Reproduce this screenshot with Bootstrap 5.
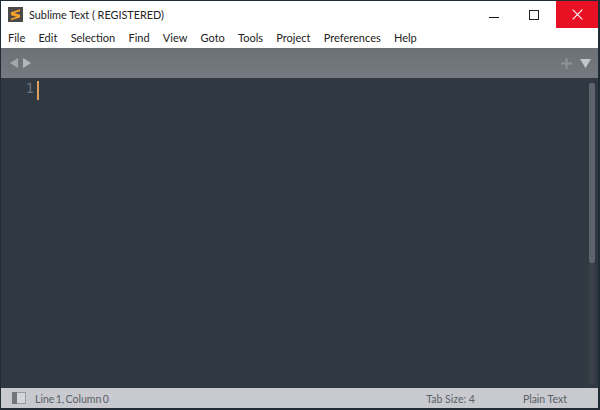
<!DOCTYPE html>
<html lang="en">
<head>
<meta charset="utf-8">
<title>Sublime Text</title>
<link href="https://cdn.jsdelivr.net/npm/bootstrap@5.3.0/dist/css/bootstrap.min.css" rel="stylesheet">
<style>
html, body { margin: 0; height: 410px; overflow: hidden; background: #1f2c36; }
.win { height: 410px; padding: 1px 2px 2px 1px; font-family: "Lato", "Open Sans", sans-serif; }
.win-inner { height: 100%; }
.titlebar { height: 27px; background: #fff; color: #222; font-size: 10.850px; }
.app-logo { width: 15px; height: 15px; margin: 0 6px 0 7px; }
.title-text { margin-top: 1px; }
.win-btn { width: 45px; height: 27px; }
.win-min { padding-left: 10px; }
.win-close { width: 42px; background: #e81123; }
.menubar { height: 20px; background: #fff; color: #222; font-size: 11px; padding-left: 7px; gap: 13.250px; }
.tabbar { height: 30px; background: linear-gradient(#6c7177, #747a80); padding: 0 7px 0 9px; }
.editor { background: #303841; }
.gutter-num { width: 33px; font-family: "DejaVu Sans Mono", monospace; font-size: 13.500px; line-height: 18px; color: #6d747b; text-align: right; margin-top: -1px; }
.editor-line { height: 20px; padding-top: 2px; }
.caret-bar { width: 2px; height: 19px; margin: 1px 0 0 3px; background: #dea05f; }
.scroll-track { width: 6px; margin: 5px 3px 3px 0; }
.scroll-thumb { height: 180px; border-radius: 2px; background: #5d646b; }
.scroll-rest { background: #3a4149; border-radius: 2px; }
.statusbar { height: 20px; background: #c8cad0; color: #5c5f66; font-size: 10.500px; padding-left: 11px; }
.status-text { margin: 3px 0 0 9px; word-spacing: -1.300px; }
.status-tab { margin: 3px 48px 0 0; }
.status-syntax { margin: 3px 31px 0 0; }
</style>
</head>
<body>
<div class="win">
  <div class="win-inner d-flex flex-column">
    <div class="titlebar d-flex align-items-center flex-shrink-0">
      <svg class="app-logo" viewBox="0 0 15 15"><rect width="15" height="15" fill="#4b4b4b"/><path d="M12 2.300 3 5.200v3l5.700 1.600L3 11.600v1.700l9-2.900V7.700L6.300 6.100 12 4.300z" fill="#f7a02a"/></svg>
      <span class="title-text">Sublime Text ( REGISTERED)</span>
      <div class="ms-auto d-flex">
        <div class="win-btn win-min d-flex align-items-center justify-content-center">
          <svg width="10" height="10" viewBox="0 0 10 10"><path d="M0 7.500h10" stroke="#111" fill="none"/></svg>
        </div>
        <div class="win-btn d-flex align-items-center justify-content-center">
          <svg width="10" height="10" viewBox="0 0 10 10"><rect x=".5" y=".5" width="9" height="9" stroke="#222" fill="none"/></svg>
        </div>
        <div class="win-btn win-close d-flex align-items-center justify-content-center">
          <svg width="11" height="11" viewBox="0 0 11 11"><path d="M.7.7l9.600 9.600M10.300.7.7 10.300" stroke="#fff" stroke-width="1.100" fill="none"/></svg>
        </div>
      </div>
    </div>
    <div class="menubar d-flex align-items-center flex-shrink-0">
      <span>File</span><span>Edit</span><span>Selection</span><span>Find</span><span>View</span><span>Goto</span><span>Tools</span><span>Project</span><span>Preferences</span><span>Help</span>
    </div>
    <div class="tabbar d-flex align-items-center flex-shrink-0">
      <svg width="21" height="10" viewBox="0 0 21 10"><path d="M8 0v10L0 5z" fill="#a4a8ad"/><path d="M13 0v10l8-5z" fill="#b4b8bc"/></svg>
      <svg class="ms-auto" width="11" height="11" viewBox="0 0 11 11"><path d="M5.500 0v11M0 5.500h11" stroke="#8e9399" stroke-width="2" fill="none"/></svg>
      <svg class="ms-2" width="11" height="9" viewBox="0 0 11 9"><path d="M0 0h11L5.500 9z" fill="#c4c7ca"/></svg>
    </div>
    <div class="editor flex-grow-1 d-flex">
      <div class="editor-line d-flex flex-grow-1">
        <span class="gutter-num">1</span><span class="caret-bar"></span>
      </div>
      <div class="scroll-track d-flex flex-column">
        <div class="scroll-thumb"></div>
        <div class="scroll-rest flex-grow-1"></div>
      </div>
    </div>
    <div class="statusbar d-flex align-items-center flex-shrink-0">
      <svg width="14" height="12" viewBox="0 0 14 12"><rect x=".5" y=".5" width="13" height="11" fill="#d4d5da" stroke="#9a9ca2"/><rect width="5" height="12" fill="#74767c"/></svg>
      <span class="status-text">Line 1, Column 0</span>
      <span class="status-tab ms-auto">Tab Size: 4</span>
      <span class="status-syntax">Plain Text</span>
    </div>
  </div>
</div>
<script src="https://cdn.jsdelivr.net/npm/bootstrap@5.3.0/dist/js/bootstrap.bundle.min.js"></script>
</body>
</html>
